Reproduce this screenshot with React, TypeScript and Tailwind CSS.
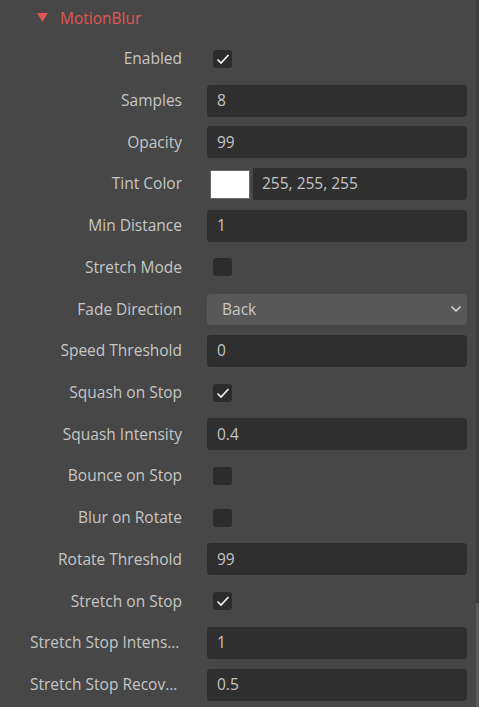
import { ChevronDown } from "lucide-react";

type Row =
  | { label: string; kind: "check"; checked: boolean }
  | { label: string; kind: "text"; value: string }
  | { label: string; kind: "color"; value: string }
  | { label: string; kind: "select"; value: string };

const rows: Row[] = [
  { label: "Enabled", kind: "check", checked: true },
  { label: "Samples", kind: "text", value: "8" },
  { label: "Opacity", kind: "text", value: "99" },
  { label: "Tint Color", kind: "color", value: "255, 255, 255" },
  { label: "Min Distance", kind: "text", value: "1" },
  { label: "Stretch Mode", kind: "check", checked: false },
  { label: "Fade Direction", kind: "select", value: "Back" },
  { label: "Speed Threshold", kind: "text", value: "0" },
  { label: "Squash on Stop", kind: "check", checked: true },
  { label: "Squash Intensity", kind: "text", value: "0.4" },
  { label: "Bounce on Stop", kind: "check", checked: false },
  { label: "Blur on Rotate", kind: "check", checked: false },
  { label: "Rotate Threshold", kind: "text", value: "99" },
  { label: "Stretch on Stop", kind: "check", checked: true },
  { label: "Stretch Stop Intensity", kind: "text", value: "1" },
  { label: "Stretch Stop Recovery", kind: "text", value: "0.5" },
];

function Check({ checked }: { checked: boolean }) {
  return (
    <div className="ml-[6px] flex h-[18px] w-[19px] items-center justify-center rounded-[3px] bg-[#2c2c2c]">
      {checked && (
        <svg width="14" height="12" viewBox="0 0 14 12">
          <path
            d="M1.5 6.5 L5 10 L12.5 2"
            fill="none"
            stroke="#f2f2f2"
            strokeWidth="1.7"
          />
        </svg>
      )}
    </div>
  );
}

function Field({ row }: { row: Row }) {
  if (row.kind === "check") return <Check checked={row.checked} />;

  if (row.kind === "color") {
    return (
      <div className="flex h-[32px] w-[260px] items-center">
        <div className="ml-[3px] h-[29px] w-[40px] border border-[#6a6a6a] bg-white" />
        <div className="ml-[3px] flex h-[32px] flex-1 items-center rounded-r-[4px] bg-[#2f2f2f] pl-[9px] text-[#c4c4c4]">
          {row.value}
        </div>
      </div>
    );
  }

  if (row.kind === "select") {
    return (
      <div className="flex h-[31px] w-[260px] items-center justify-between rounded-[4px] bg-[#585858] pl-[15px] pr-[3px] text-[#c8c8c8]">
        <span>{row.value}</span>
        <ChevronDown size={16} strokeWidth={2.5} color="#d0d0d0" />
      </div>
    );
  }

  return (
    <div className="flex h-[32px] w-[260px] items-center rounded-[4px] bg-[#2f2f2f] pl-[10px] text-[#c4c4c4]">
      {row.value}
    </div>
  );
}

export default function App() {
  return (
    <div
      className="flex h-[707px] w-[479px] overflow-hidden bg-[#474747] text-[15.5px]"
      style={{ fontFamily: '"Open Sans", "Noto Sans", sans-serif' }}
    >
      <div className="flex-1">
        {/* Header */}
        <div className="flex h-[38px] items-center pl-[37px]">
          <svg width="11" height="9" viewBox="0 0 11 9" className="mb-[3px]">
            <path d="M0 0 H11 L5.5 9 Z" fill="#e25555" />
          </svg>
          <span className="ml-[12px] text-[#e25555]">MotionBlur</span>
        </div>

        {/* Property rows */}
        {rows.map((row) => (
          <div key={row.label} className="flex h-[41.73px] items-center">
            <div className="w-[182px] truncate pl-[30px] text-right text-[#c6c6c6]">
              {row.label}
            </div>
            <div className="ml-[25px]">
              <Field row={row} />
            </div>
          </div>
        ))}
      </div>

      {/* Scrollbar */}
      <div className="flex w-[3px] flex-col">
        <div className="h-[603px] bg-[#3d3d3d]" />
        <div className="flex-1 bg-[#5a5a5a]" />
      </div>
    </div>
  );
}
